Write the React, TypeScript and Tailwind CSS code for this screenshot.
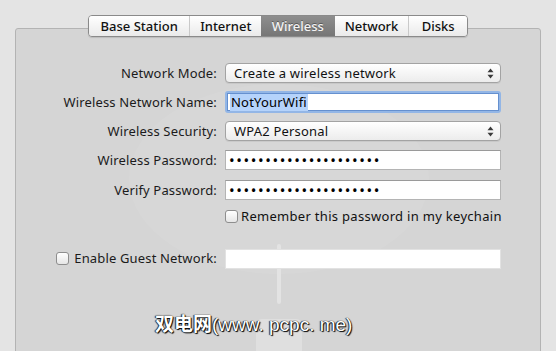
import React from 'react'

const font = { fontFamily: '"Noto Sans", "DejaVu Sans", sans-serif' }

const tabs = [
  { name: 'Base Station', w: 'w-[101px]' },
  { name: 'Internet', w: 'w-[72px]' },
  { name: 'Wireless', w: 'w-[74px]', active: true },
  { name: 'Network', w: 'w-[74px]' },
  { name: 'Disks', w: 'w-[59px]' },
]

function Arrows() {
  return (
    <svg width="7" height="11" viewBox="0 0 7 11" className="shrink-0">
      <path d="M3.5 0.5 L6.5 4.2 H0.5 Z" fill="#3a3a3a" />
      <path d="M3.5 10.5 L6.5 6.8 H0.5 Z" fill="#3a3a3a" />
    </svg>
  )
}

function Select({ value }: { value: string }) {
  return (
    <div className="flex h-[20px] w-[276px] items-center justify-between rounded-[4px] border border-[#a3a3a3] bg-gradient-to-b from-white to-[#ececec] pl-[8px] pr-[6px] text-[13px] leading-none tracking-[0.2px] text-[#111] shadow-[0_1px_0_rgba(0,0,0,0.06)]">
      <span>{value}</span>
      <Arrows />
    </div>
  )
}

function Field({ children }: { children?: React.ReactNode }) {
  return (
    <div className="flex h-[20px] w-[276px] items-center border border-[#b4b4b4] border-t-[#9a9a9a] bg-white pl-[3px] text-[13px] leading-none text-black">
      {children}
    </div>
  )
}

function Dots() {
  return <span className="text-[15px] leading-none tracking-[1.6px]">{'•'.repeat(21)}</span>
}

function Check() {
  return (
    <span className="inline-block h-[13px] w-[13px] shrink-0 rounded-[3px] border border-[#8e8e8e] bg-gradient-to-b from-white to-[#e6e6e6]" />
  )
}

function Row({ label, children, className = '' }: { label: React.ReactNode; children: React.ReactNode; className?: string }) {
  return (
    <div className={'flex items-center ' + className}>
      <div className="w-[202px] pr-[1px] text-right text-[13px] leading-none tracking-[0.15px] text-[#1b1b1b]">{label}</div>
      <div className="ml-[7px]">{children}</div>
    </div>
  )
}

export default function App() {
  return (
    <div className="relative h-[351px] w-[556px] overflow-hidden bg-[#e4e4e4] pt-[15px]" style={font}>
      <div className="relative z-10 mx-auto flex h-[22px] w-[380px] overflow-hidden rounded-[4px] border border-[#8a8a8a] shadow-[0_1px_1px_rgba(0,0,0,0.12)]">
        {tabs.map((t, i) => (
          <div
            key={t.name}
            className={
              'flex h-full items-center justify-center text-[13px] font-medium leading-none ' +
              t.w +
              (t.active
                ? ' bg-gradient-to-b from-[#8e8e8e] to-[#767676] text-[#f4f4f4] [text-shadow:0_-1px_0_rgba(0,0,0,0.35)]'
                : ' bg-gradient-to-b from-white to-[#eaeaea] text-[#111]') +
              (i > 0 && !t.active && !tabs[i - 1].active ? ' border-l border-[#c9c9c9]' : '')
            }
          >
            {t.name}
          </div>
        ))}
      </div>

      <div className="relative mx-[15px] -mt-[9px] h-[340px] rounded-t-[3px] border border-[#b3b3b3] bg-[#d5d5d5] pt-[34px]">
        <svg className="pointer-events-none absolute left-0 top-0" width="526" height="330" viewBox="0 0 526 330">
          <ellipse cx="263" cy="150" rx="150" ry="95" fill="#ffffff" opacity="0.06" />
          <rect x="261" y="215" width="4" height="60" rx="2" fill="#e6e6e6" opacity="0.8" />
          <rect x="240" y="290" width="46" height="50" rx="6" fill="#e0e0e0" opacity="0.9" />
        </svg>

        <div className="relative">
          <Row label="Network Mode:">
            <Select value="Create a wireless network" />
          </Row>
          <Row label="Wireless Network Name:" className="mt-[8px]">
            <div className="h-[22px] w-[276px] rounded-[3px] bg-[#93b6e6] p-[2px]">
              <div className="flex h-[18px] items-center border border-[#6590cf] bg-white pl-[2px] text-[13px] leading-none tracking-[0.2px] text-black">
                <span className="bg-[#b5d3fb] px-[1px] py-[2px]">NotYourWifi</span>
              </div>
            </div>
          </Row>
          <Row label="Wireless Security:" className="mt-[8px]">
            <Select value="WPA2 Personal" />
          </Row>
          <Row label="Wireless Password:" className="mt-[9px]">
            <Field>
              <Dots />
            </Field>
          </Row>
          <Row label="Verify Password:" className="mt-[10px]">
            <Field>
              <Dots />
            </Field>
          </Row>
          <Row label="" className="mt-[10px]">
            <div className="flex items-center gap-[3px] text-[13px] leading-none tracking-[0.3px] text-[#111]">
              <Check />
              <span>Remember this password in my keychain</span>
            </div>
          </Row>
          <Row
            className="mt-[26px]"
            label={
              <span className="inline-flex items-center gap-[5px]">
                <Check />
                <span>Enable Guest Network:</span>
              </span>
            }
          >
            <div className="h-[20px] w-[276px] border border-[#e2e2e2] bg-white" />
          </Row>

          <div
            className="ml-[139px] mt-[46px] text-[19px] leading-none text-white [text-shadow:0_0_1px_#000,1px_1px_1px_#000,-1px_0_1px_#333]"
            style={{ fontFamily: '"Liberation Sans", "Noto Sans CJK SC", sans-serif' }}
          >
            <span className="font-bold">双电网</span>(www. pcpc. me)
          </div>
        </div>
      </div>
    </div>
  )
}
